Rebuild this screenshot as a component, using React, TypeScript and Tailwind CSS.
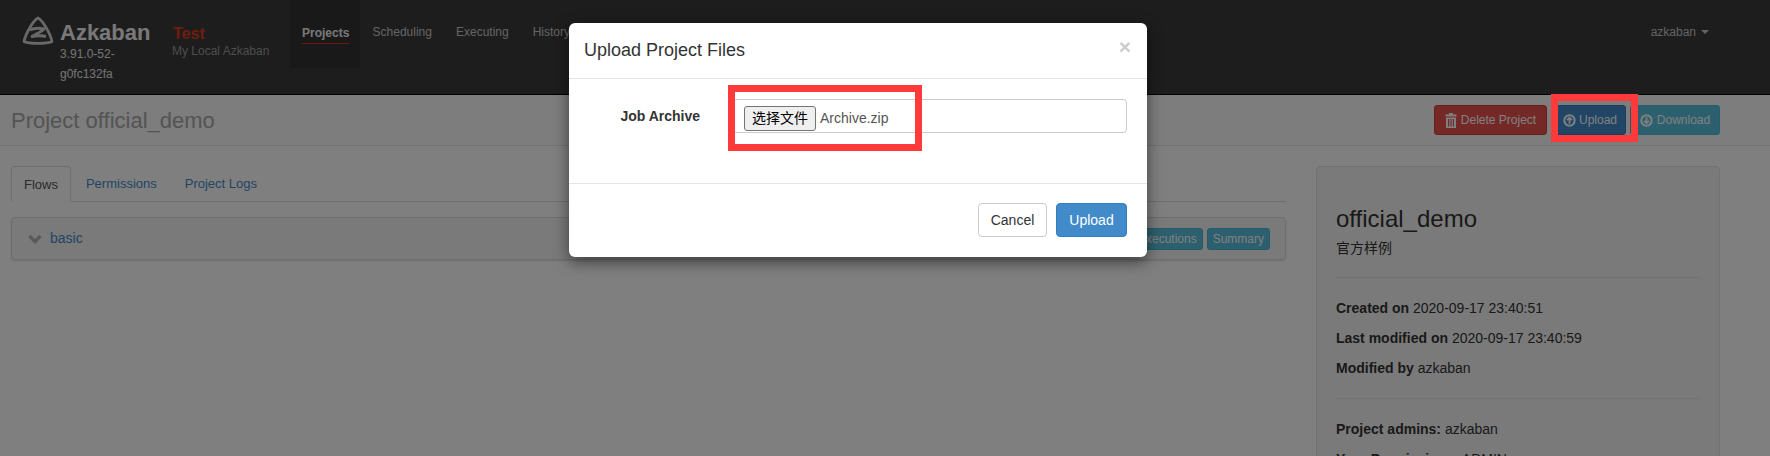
const font = { fontFamily: '"Liberation Sans", "Noto Sans CJK SC", sans-serif' };

function TrashIcon() {
  return (
    <svg className="h-[15px] w-[12px]" viewBox="0 0 12 15" fill="currentColor">
      <path d="M4 0h4v1.5h3.5v2H.5v-2H4zM1 4.5h10V15H1zM3 6v7.5h1.2V6zM5.4 6v7.5h1.2V6zM7.8 6v7.5H9V6z" fillRule="evenodd" />
    </svg>
  );
}

function CircleArrow({ down }: { down?: boolean }) {
  return (
    <svg className="h-[13px] w-[13px]" viewBox="0 0 13 13" fill="none" stroke="currentColor">
      <circle cx="6.5" cy="6.5" r="5.2" strokeWidth="2" />
      <path
        d={down ? "M6.5 3.2v6M4 6.8l2.5 2.5L9 6.8" : "M6.5 9.8v-6M4 6.2l2.5-2.5L9 6.2"}
        strokeWidth="1.8"
      />
    </svg>
  );
}

function Logo() {
  return (
    <svg className="h-[29px] w-[32px] shrink-0" viewBox="0 0 32 29" fill="none" stroke="#d0d0d0">
      <path d="M16 2C12 4 4 16 2 25.500c5 2.500 23 2.500 28 0C28 16 20 4 16 2z" strokeWidth="2.800" strokeLinejoin="round" />
      <path d="M8 14c3-1.500 9-2 14-1-3 3-8 5-12 7.500 4-1 10-1 14 0" strokeWidth="3" strokeLinejoin="round" />
    </svg>
  );
}

function NavItem({ label, active }: { label: string; active?: boolean }) {
  return <span className={`text-xs ${active ? "font-bold text-[#f0f0f0]" : "text-[#c8c8c8]"}`}>{label}</span>;
}

function Header() {
  return (
    <header className="flex h-[95px] shrink-0 border-b border-black bg-[#3a3a3a]">
      <div className="flex w-[172px] shrink-0 gap-[6px] pt-[16px] pl-[22px]">
        <Logo />
        <div className="w-[92px]">
          <div className="h-[28px] text-[22px] leading-[34px] font-bold text-[#f2f2f2]">Azkaban</div>
          <div className="text-xs leading-[20px] text-[#e8e8e8]">3.91.0-52-<br />g0fc132fa</div>
        </div>
      </div>
      <div className="w-[118px] shrink-0 pt-[24px]">
        <div className="pl-[1px] text-base leading-[20px] font-bold text-[#e03a1a]">Test</div>
        <div className="text-xs leading-[14px] whitespace-nowrap text-[#9a9a9a]">My Local Azkaban</div>
      </div>
      <nav className="flex h-[68px] w-[280px] shrink-0">
        <div className="h-full w-[70px] bg-[#333] pt-[24px] pl-[12px]">
          <div className="w-[47px] border-b border-[#e0301e] pb-[2px] leading-[16px]">
            <NavItem label="Projects" active />
          </div>
        </div>
        <div className="flex gap-[24px] pt-[24px] pl-[13px] leading-[16px]">
          <NavItem label="Scheduling" />
          <NavItem label="Executing" />
          <NavItem label="History" />
        </div>
      </nav>
      <div className="ml-auto flex h-[68px] items-start gap-[5px] pt-[24px] pr-[61px] text-xs leading-[16px] text-[#c8c8c8]">
        azkaban
        <span className="mt-[6px] border-x-4 border-t-4 border-x-transparent border-t-[#c8c8c8]" />
      </div>
    </header>
  );
}

function PageHeader() {
  return (
    <div className="flex h-[51px] shrink-0 items-center justify-between border-b border-[#e5e5e5] bg-[#fafafa] pr-[50px] pl-[11px]">
      <h1 className="text-[22px] text-[#a8a8a8]">Project official_demo</h1>
      <div className="flex gap-[4px] text-xs text-white">
        <a className="mr-[5px] flex h-[30px] w-[113px] items-center justify-center gap-[4px] rounded-[3px] border border-[#d43f3a] bg-[#e8534f]"><TrashIcon />Delete Project</a>
        <a className="flex h-[30px] w-[70px] items-center justify-center gap-[3px] rounded-[3px] border border-[#357ebd] bg-[#428bca] pr-[2px]"><CircleArrow />Upload</a>
        <a className="flex h-[30px] w-[90px] items-center justify-center gap-[4px] rounded-[3px] border border-[#46b8da] bg-[#5bc0de]"><CircleArrow down />Download</a>
      </div>
    </div>
  );
}

function Tabs() {
  return (
    <div className="flex h-[36px] gap-[2px] border-b border-[#ddd] text-[13px]">
      <div className="h-[36px] rounded-t-[4px] border border-[#ddd] border-b-white bg-white px-[12px] leading-[36px] text-[#555]">Flows</div>
      <div className="px-[13px] leading-[36px] text-[#428bca]">Permissions</div>
      <div className="px-[13px] leading-[36px] text-[#428bca]">Project Logs</div>
    </div>
  );
}

function FlowRow() {
  return (
    <div className="mt-[15px] flex h-[43px] items-center justify-between rounded-[4px] border border-[#ddd] bg-[#f5f5f5] pr-[15px] pl-[16px] shadow-sm">
      <div className="flex items-center gap-[8px] text-[14px] text-[#428bca]">
        <svg className="h-[10px] w-[14px]" viewBox="0 0 14 10" fill="none" stroke="#b4b4b4">
          <path d="M1.500 2l5.500 5.500L12.500 2" strokeWidth="3.400" />
        </svg>
        basic
      </div>
      <div className="flex gap-[4px] text-xs text-white">
        <span className="flex h-[22px] items-center rounded-[3px] border border-[#46b8da] bg-[#5bc0de] px-[5px]">Executions</span>
        <span className="flex h-[22px] items-center rounded-[3px] border border-[#46b8da] bg-[#5bc0de] px-[5px]">Summary</span>
      </div>
    </div>
  );
}

function InfoLine({ label, value }: { label: string; value: string }) {
  return (
    <p className="text-[14px] leading-[20px] text-[#333]">
      <strong>{label}</strong> {value}
    </p>
  );
}

function ProjectPanel() {
  return (
    <aside className="h-[330px] w-[404px] shrink-0 rounded-[4px] border border-[#e3e3e3] bg-[#f5f5f5] px-[19px] pt-[34px]">
      <h2 className="text-[24px] leading-[36px] text-[#333]">official_demo</h2>
      <p className="mt-[1px] text-[14px] leading-[20px] text-[#333]">官方样例</p>
      <hr className="mt-[19px] border-[#e5e5e5]" />
      <div className="mt-[20px] flex flex-col gap-[10px]">
        <InfoLine label="Created on" value="2020-09-17 23:40:51" />
        <InfoLine label="Last modified on" value="2020-09-17 23:40:59" />
        <InfoLine label="Modified by" value="azkaban" />
      </div>
      <hr className="mt-[20px] border-[#e5e5e5]" />
      <div className="mt-[20px] flex flex-col gap-[10px]">
        <InfoLine label="Project admins:" value="azkaban" />
        <InfoLine label="Your Permissions:" value="ADMIN" />
      </div>
    </aside>
  );
}

function UploadModal() {
  return (
    <div className="absolute top-[23px] left-[569px] flex h-[234px] w-[578px] flex-col rounded-[6px] bg-white shadow-[0_5px_15px_rgba(0,0,0,0.5)]">
      <div className="flex h-[56px] items-center justify-between border-b border-[#e5e5e5] pr-[16px] pl-[15px]">
        <h3 className="pb-[2px] text-lg text-[#333]">Upload Project Files</h3>
        <span className="-mt-[8px] text-[21px] leading-none font-bold text-[#ccc]">×</span>
      </div>
      <div className="flex h-[105px] gap-[32px] border-b border-[#e5e5e5] pt-[20px] pr-[20px]">
        <label className="w-[131px] shrink-0 pt-[7px] text-right text-[14px] leading-[20px] font-bold text-[#333]">Job Archive</label>
        <div className="flex h-[34px] flex-1 items-center rounded-[4px] border border-[#ccc] pt-[4px] pl-[11px] text-[14px] text-[#555]">
          <button className="flex h-[25px] w-[72px] items-center justify-center rounded-[3px] border border-[#767676] bg-[#efefef] text-[14px] text-black">选择文件</button>
          <span className="ml-[4px]">Archive.zip</span>
        </div>
      </div>
      <div className="flex flex-1 items-start justify-end gap-[9px] pt-[19px] pr-[20px] text-[14px]">
        <button className="h-[34px] w-[69px] rounded-[4px] border border-[#ccc] text-[#333]">Cancel</button>
        <button className="h-[34px] w-[71px] rounded-[4px] border border-[#357ebd] bg-[#428bca] text-white">Upload</button>
      </div>
    </div>
  );
}

export default function App() {
  return (
    <div className="relative flex h-[456px] w-[1770px] flex-col overflow-hidden bg-white" style={font}>
      <Header />
      <PageHeader />
      <main className="flex gap-[30px] pt-[20px] pr-[50px] pl-[11px]">
        <div className="min-w-0 flex-1">
          <Tabs />
          <FlowRow />
        </div>
        <ProjectPanel />
      </main>

      {/* modal backdrop + dialog */}
      <div className="absolute inset-0 bg-black/50" />
      <UploadModal />

      {/* red annotation boxes drawn on top of the screenshot */}
      <div className="absolute top-[85px] left-[728px] h-[66px] w-[194px] border-[7px] border-[#ff3a3a]" />
      <div className="absolute top-[94px] left-[1551px] h-[48px] w-[87px] border-[7px] border-[#ff3a3a]" />
    </div>
  );
}
